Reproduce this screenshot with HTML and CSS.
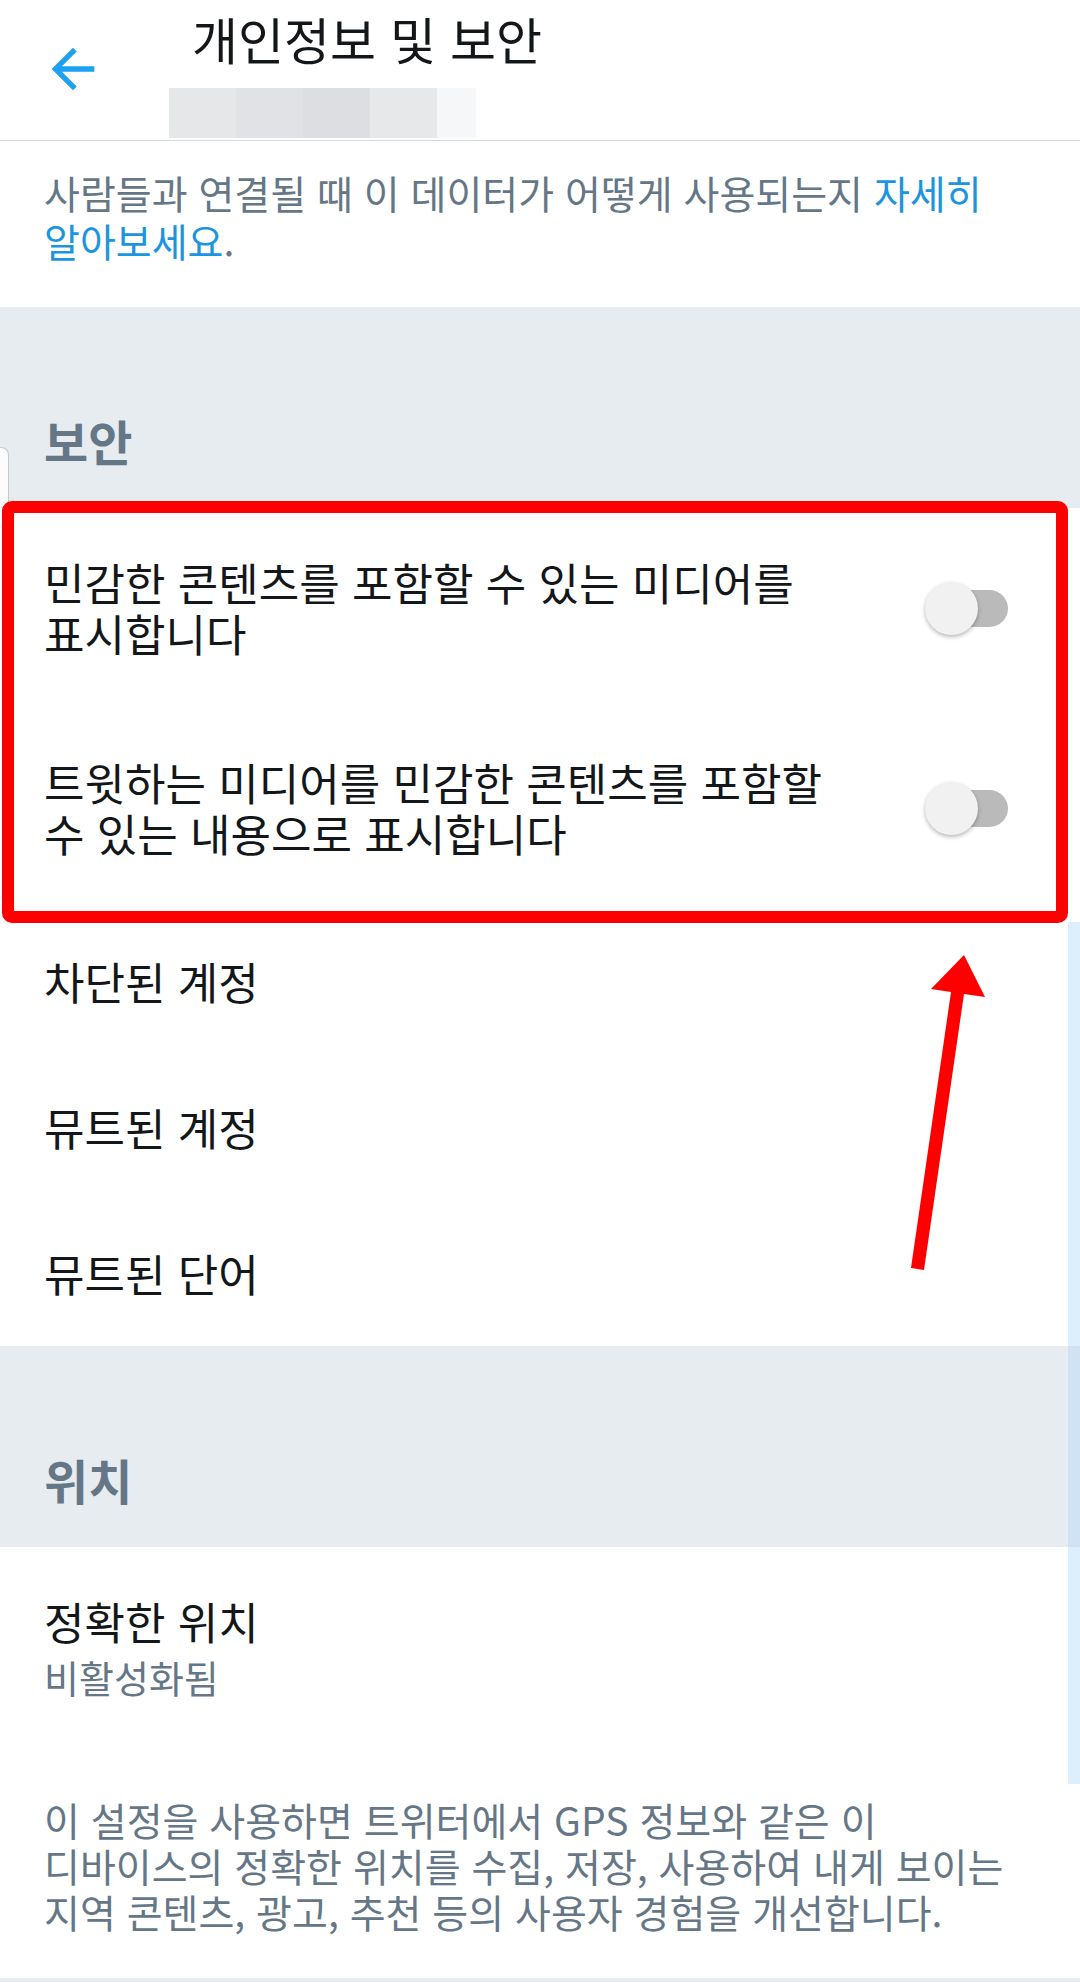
FILE: index.html
```html
<!DOCTYPE html>
<html lang="ko">
<head>
	<meta charset="UTF-8">
	<title>개인정보 및 보안</title>
	<link rel="stylesheet" href="styles.css">
</head>
<body>
	<div class="page">
		<header class="topbar">
			<div class="back">
				<svg viewBox="0 0 24 24"><path d="M20 11H7.83l5.59-5.59L12 4l-8 8 8 8 1.41-1.41L7.83 13H20v-2z"/></svg>
			</div>
			<div class="head-text">
				<h1>개인정보 및 보안</h1>
				<div class="handle"><span></span><span></span><span></span><span></span><span></span></div>
			</div>
		</header>

		<p class="intro"><span class="part">사람들과 연결될 때 이 데이터가 어떻게 사용되는지</span> <a class="part" href="#">자세히</a> <span class="part"><a href="#">알아보세요</a>.</span></p>

		<h2 class="section-head">보안</h2>
		<div class="row row-toggle">
			<span class="row-label">민감한 콘텐츠를 포함할 수 있는 미디어를 표시합니다</span>
			<span class="switch"><span class="track"></span><span class="thumb"></span></span>
		</div>
		<div class="row row-toggle">
			<span class="row-label">트윗하는 미디어를 민감한 콘텐츠를 포함할 수 있는 내용으로 표시합니다</span>
			<span class="switch"><span class="track"></span><span class="thumb"></span></span>
		</div>
		<div class="row"><span class="row-label">차단된 계정</span></div>
		<div class="row"><span class="row-label">뮤트된 계정</span></div>
		<div class="row"><span class="row-label">뮤트된 단어</span></div>

		<h2 class="section-head">위치</h2>
		<div class="loc">
			<div class="loc-title">정확한 위치</div>
			<div class="loc-sub">비활성화됨</div>
			<p class="loc-desc">이 설정을 사용하면 트위터에서 GPS 정보와 같은 이 디바이스의 정확한 위치를 수집, 저장, 사용하여 내게 보이는 지역 콘텐츠, 광고, 추천 등의 사용자 경험을 개선합니다.</p>
		</div>
		<div class="foot"></div>

		<!-- 스크린샷 위에 그려진 표시 -->
		<div class="edge-card"></div>
		<div class="scroll-strip"></div>
		<div class="mark-box"></div>
		<svg class="mark-arrow" viewBox="0 0 1080 1982">
			<polygon points="964,955 985,997 964,994 924,1270 911,1268 951,992 931,989"/>
		</svg>
	</div>
</body>
</html>
```

FILE: styles.css
```css
*{
	margin: 0;
	padding: 0;
	box-sizing: border-box;
}
body{
	width: 1080px;
	height: 1982px;
	overflow: hidden;
	background: #fff;
	font-family: "Noto Sans CJK KR", "Noto Sans", sans-serif;
	color: #14171a;
	word-break: keep-all;
}
.page{
	position: relative;
	width: 1080px;
	height: 1982px;
}

/* 상단 바 */
.topbar{
	display: flex;
	height: 141px;
	border-bottom: 1px solid #d6d9dc;
}
.back{
	width: 64px;
	height: 64px;
	margin: 37px 0 0 41px;
	color: #1da1f2;
}
.back svg{
	display: block;
	width: 64px;
	height: 64px;
	fill: currentColor;
}
.head-text{
	margin-left: 64px;
	padding-top: 8px;
}
.head-text h1{
	font-size: 50px;
	line-height: 60px;
	font-weight: 400;
	padding-left: 23px;
}
.handle{
	display: flex;
	height: 50px;
	margin-top: 20px;
}
.handle span{
	width: 67px;
	background: #e5e7e9;
}
.handle span:nth-child(2){
	background: #e0e2e5;
}
.handle span:nth-child(3){
	background: #dcdee1;
}
.handle span:nth-child(4){
	background: #e6e8ea;
}
.handle span:nth-child(5){
	width: 39px;
	background: #f6f7f8;
}

/* 안내 문구 */
.intro{
	padding: 27px 44px 43px;
	font-size: 39px;
	line-height: 48px;
	color: #657786;
}
.intro .part{
	display: inline-block;
	vertical-align: top;
	height: 48px;
}
.intro a{
	color: #1b95e0;
	text-decoration: none;
}

/* 섹션 제목 */
.section-head{
	height: 201px;
	padding: 103px 44px 38px;
	background: #e6ecf0;
	font-size: 48px;
	line-height: 60px;
	font-weight: 700;
	color: #657786;
}

/* 목록 */
.row{
	display: flex;
	align-items: center;
	height: 146px;
	padding: 0 44px;
	font-size: 44px;
	line-height: 51px;
}
.row-toggle{
	height: 200px;
	padding-right: 72px;
	gap: 70px;
}
.row-label{
	flex: 1;
}
.switch{
	position: relative;
	width: 83px;
	height: 53px;
	flex-shrink: 0;
}
.switch .track{
	position: absolute;
	left: 8px;
	right: 0;
	top: 8px;
	height: 37px;
	border-radius: 19px;
	background: #bababa;
}
.switch .thumb{
	position: absolute;
	left: 0;
	top: 0;
	width: 53px;
	height: 53px;
	border-radius: 50%;
	background: #f1f1f1;
	box-shadow: 0 2px 4px rgba(0,0,0,.28);
}

/* 위치 */
.loc{
	padding: 47px 44px 44px;
}
.loc-title{
	font-size: 44px;
	line-height: 54px;
}
.loc-sub{
	margin-top: 7px;
	font-size: 38px;
	line-height: 44px;
	color: #657786;
}
.loc-desc{
	margin-top: 97px;
	font-size: 39px;
	line-height: 46px;
	color: #657786;
}
.foot{
	height: 60px;
	background: #e6ecf0;
}

/* 덧그린 표시 */
.edge-card{
	position: absolute;
	left: 0;
	top: 447px;
	width: 9px;
	height: 60px;
	background: #fcfcfc;
	border-top: 1px solid #c9c9c9;
	border-right: 1px solid #c9c9c9;
	border-top-right-radius: 8px;
}
.scroll-strip{
	position: absolute;
	left: 1068px;
	top: 922px;
	width: 12px;
	height: 862px;
	background: rgba(180, 218, 248, .45);
}
.mark-box{
	position: absolute;
	left: 2px;
	top: 501px;
	width: 1066px;
	height: 422px;
	border: 12px solid #ff0000;
	border-radius: 10px;
}
.mark-arrow{
	position: absolute;
	left: 0;
	top: 0;
	width: 1080px;
	height: 1982px;
	fill: #ff0000;
}
```
